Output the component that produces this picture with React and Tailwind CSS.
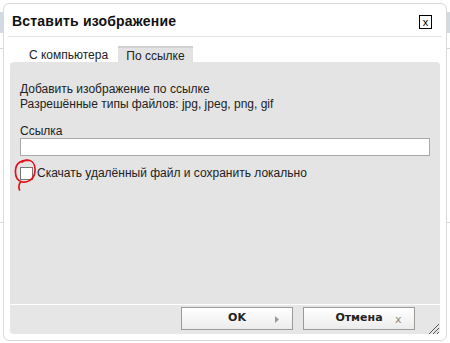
import React from "react";

export default function App() {
  return (
    <div className="relative w-[450px] h-[343px] bg-white overflow-hidden" style={{ fontFamily: '"Liberation Sans", Arial, sans-serif' }}>
      {/* background bits behind dialog */}
      <div className="absolute left-0 top-[12px] w-[450px] h-[21px] bg-[#d3dae2]" />
      <div className="absolute left-0 top-[48px] w-[450px] h-px bg-[#d6d6d6]" />
      <div className="absolute left-0 top-[222px] w-[450px] h-px bg-[#dadada]" />

      <div className="absolute left-[3px] top-[3px] w-[444px] h-[338px] bg-white border border-[#d9d9d9] rounded-[6px] flex flex-col">
        {/* title */}
        <div className="h-[33px] mx-[4px] border-b border-[#e4e4e4] flex items-center justify-between pl-[4px] pr-[10px] pt-[2px]">
          <span className="text-[14px] font-bold text-[#111] tracking-[0.2px]">Вставить изображение</span>
          <div className="w-[13px] h-[14px] border border-black flex items-center justify-center text-[11px] leading-none text-black mt-[2px]">x</div>
        </div>
        {/* tabs */}
        <div className="flex pl-[15px] mt-[11px] text-[12px] text-[#222]">
          <div className="h-[13px] w-[99px] bg-white flex items-center justify-center pt-[1px]">С компьютера</div>
          <div className="h-[13px] w-[75px] bg-[#e3e3e3] border-t-2 border-[#d0d0d0] flex items-center justify-center box-content -mt-[2px] pt-[1px]">По ссылке</div>
        </div>
        {/* panel */}
        <div className="mx-[6px] bg-[#e4e4e4] rounded-t-[4px] h-[242px] px-[10px] pt-[20px] text-[12px] text-[#222] leading-[15px]">
          <div>Добавить изображение по ссылке</div>
          <div>Разрешённые типы файлов: jpg, jpeg, png, gif</div>
          <div className="mt-[12px] leading-[14px]">Ссылка</div>
          <div className="mt-0 h-[18px] w-[410px] bg-white border border-[#a9a9a9]" />
          <div className="mt-[10px] flex items-center relative">
            <div className="w-[13px] h-[13px] bg-white border border-[#777]" />
            <span className="ml-[4px]">Скачать удалённый файл и сохранить локально</span>
            <svg className="absolute left-[-6px] top-[-7px]" width="24" height="34" viewBox="0 0 24 34">
              <path d="M14 1.5 C 8 0.5, 2 4, 1.5 11 C 1 18, 4 22, 8 23 C 13 24, 19 21, 20.5 15 C 22 8, 20 3, 16 1.5 C 13 0.8, 10 1.5, 8 3 M 6.5 23 C 5 25, 4.5 28, 5.5 31" fill="none" stroke="#e0141b" strokeWidth="1.7" strokeLinecap="round" strokeLinejoin="round" />
            </svg>
          </div>
        </div>
        {/* footer */}
        <div className="mx-[6px] border-t border-white bg-[#e6e6e6] rounded-b-[4px] h-[30px] relative flex items-start justify-end pr-[25px] pt-[2px] gap-[10px]">
          <button className="w-[112px] h-[23px] border border-[#9a9a9a] bg-gradient-to-b from-white to-[#ececec] flex items-center justify-center relative text-[11px] font-bold text-[#222]" style={{ fontFamily: '"DejaVu Sans", Verdana, sans-serif' }}>
            <span>OK</span>
            <svg className="absolute left-[93px] top-[8px]" width="5" height="7" viewBox="0 0 5 7"><path d="M0 0 L4 3.5 L0 7 Z" fill="#999" /></svg>
          </button>
          <button className="w-[112px] h-[23px] border border-[#9a9a9a] bg-gradient-to-b from-white to-[#ececec] flex items-center justify-center relative text-[11px] font-bold text-[#222]" style={{ fontFamily: '"DejaVu Sans", Verdana, sans-serif' }}>
            <span>Отмена</span>
            <span className="absolute left-[91px] top-[4px] text-[11px] font-normal text-[#888]">x</span>
          </button>
          <svg className="absolute right-[0px] bottom-[-1px]" width="12" height="12" viewBox="0 0 12 12">
            <path d="M11 1 L1 11 M11 5 L5 11 M11 9 L9 11" stroke="#555" strokeWidth="1" />
          </svg>
        </div>
      </div>
    </div>
  );
}
